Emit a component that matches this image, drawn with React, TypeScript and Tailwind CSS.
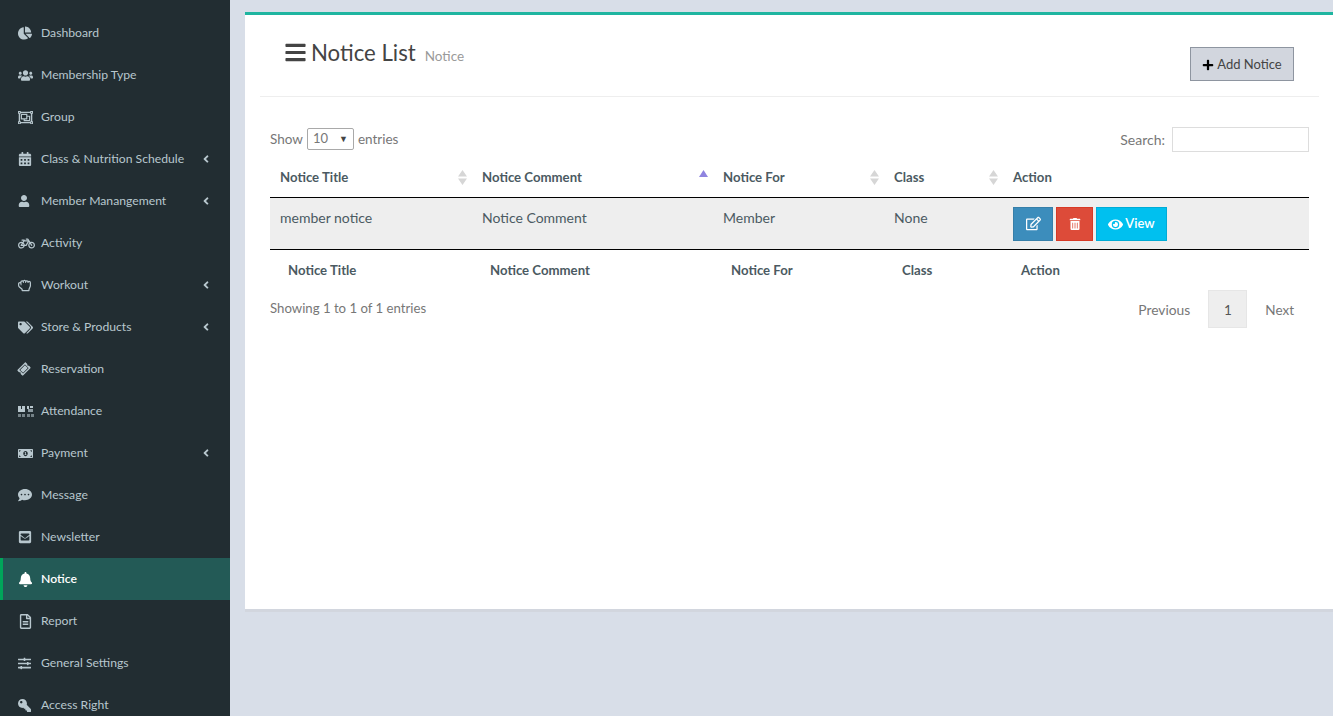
import type { ReactNode } from "react";
import {
  FaAngleLeft,
  FaBars,
  FaBell,
  FaBicycle,
  FaCalendarAlt,
  FaChartPie,
  FaCommentDots,
  FaEnvelopeSquare,
  FaEye,
  FaKey,
  FaMoneyBillAlt,
  FaPlus,
  FaRegEdit,
  FaRegFileAlt,
  FaRegHandRock,
  FaRegObjectGroup,
  FaSlidersH,
  FaTags,
  FaTicketAlt,
  FaTrashAlt,
  FaUser,
  FaUsers,
} from "react-icons/fa";

interface NavItem {
  label: string;
  icon: ReactNode;
  arrow?: boolean;
  active?: boolean;
}

function AttendanceIcon() {
  return (
    <svg width="16" height="11" viewBox="0 0 16 11" fill="currentColor">
      <rect x="0" y="0" width="3" height="3" />
      <rect x="4" y="0" width="3" height="3" />
      <rect x="0" y="3" width="7" height="3" />
      <rect x="9" y="0" width="2" height="3" />
      <rect x="12" y="0" width="3" height="2" />
      <rect x="10" y="3" width="5" height="3" opacity="0.7" />
      <rect x="0" y="8" width="3" height="3" opacity="0.55" />
      <rect x="4" y="8" width="3" height="3" opacity="0.55" />
      <rect x="9" y="8" width="3" height="3" opacity="0.55" />
      <rect x="13" y="8" width="3" height="3" opacity="0.55" />
    </svg>
  );
}

const navItems: NavItem[] = [
  { label: "Dashboard", icon: <FaChartPie size={14} /> },
  { label: "Membership Type", icon: <FaUsers size={15} /> },
  { label: "Group", icon: <FaRegObjectGroup size={15} /> },
  { label: "Class & Nutrition Schedule", icon: <FaCalendarAlt size={14} />, arrow: true },
  { label: "Member Manangement", icon: <FaUser size={12} />, arrow: true },
  { label: "Activity", icon: <FaBicycle size={17} /> },
  { label: "Workout", icon: <FaRegHandRock size={13} />, arrow: true },
  { label: "Store & Products", icon: <FaTags size={15} />, arrow: true },
  { label: "Reservation", icon: <FaTicketAlt size={12} className="-rotate-45" /> },
  { label: "Attendance", icon: <AttendanceIcon /> },
  { label: "Payment", icon: <FaMoneyBillAlt size={15} />, arrow: true },
  { label: "Message", icon: <FaCommentDots size={14} /> },
  { label: "Newsletter", icon: <FaEnvelopeSquare size={14} /> },
  { label: "Notice", icon: <FaBell size={15} />, active: true },
  { label: "Report", icon: <FaRegFileAlt size={15} /> },
  { label: "General Settings", icon: <FaSlidersH size={13} /> },
  { label: "Access Right", icon: <FaKey size={13} className="-scale-x-100" /> },
];

const columns = [
  { label: "Notice Title", value: "member notice", width: "w-[202px]" },
  { label: "Notice Comment", value: "Notice Comment", width: "w-[241px]" },
  { label: "Notice For", value: "Member", width: "w-[171px]" },
  { label: "Class", value: "None", width: "w-[119px]" },
];

function SortArrows({ active }: { active?: boolean }) {
  if (active) {
    return (
      <svg
        width="9"
        height="7"
        viewBox="0 0 9 7"
        className="absolute right-[5px] top-[13px] text-[#8f84e0]"
        fill="currentColor"
      >
        <path d="M4.5 0 9 7H0z" />
      </svg>
    );
  }
  return (
    <svg
      width="9"
      height="15"
      viewBox="0 0 9 15"
      className="absolute right-[5px] top-[13px] text-[#d6d6d6]"
      fill="currentColor"
    >
      <path d="M4.5 0 9 6.500H0zM4.500 15 0 8.500h9z" />
    </svg>
  );
}

export default function App() {
  return (
    <div className="flex h-screen overflow-hidden bg-[#d8dee8] font-['Lato','Open_Sans',sans-serif] text-[13.500px] text-[#4b5a62]">
      <aside className="w-[230px] shrink-0 bg-[#222d32] pt-[12px]">
        {navItems.map((item) => (
          <div
            key={item.label}
            className={`flex h-[42px] items-center border-l-[3px] pr-[18px] text-[12.200px] ${
              item.active
                ? "border-[#00a65a] bg-[#235a56] font-semibold text-white"
                : "border-transparent text-[#b8c7ce]"
            }`}
          >
            <span className="flex w-[38px] items-center pl-[15px]">{item.icon}</span>
            <span className="flex-1 whitespace-nowrap">{item.label}</span>
            {item.arrow && <FaAngleLeft size={12} />}
          </div>
        ))}
      </aside>

      <main className="flex-1 pl-[15px] pt-[12px]">
        <section className="h-[600px] border-t-[3px] border-b-[3px] border-t-[#1fb5a0] border-b-[#d2d6de] bg-white">
          <header className="mx-[15px] flex h-[82px] justify-between border-b border-[#eeeeee] pl-[25px] pr-[25px]">
            <div className="flex items-baseline pt-[23px] text-[#444444]">
              <FaBars size={23} className="-ml-[1px] mr-[4px] translate-y-[3px]" />
              <h1 className="text-[22.200px] font-normal leading-[30px]">Notice List</h1>
              <span className="ml-[9px] text-[13.500px] text-[#9a9a9a]">Notice</span>
            </div>
            <button className="mt-[32px] flex h-[34px] w-[104px] items-center justify-center gap-[3px] border border-[#8e95a0] bg-[#d2d6de] pt-[1px] text-[13px] text-[#444444]">
              <FaPlus size={12} className="text-black" />
              Add Notice
            </button>
          </header>

          <div className="px-[25px]">
            <div className="flex h-[60px] items-center justify-between pt-[24px] text-[#777777]">
              <div className="flex items-center gap-[4px]">
                <span>Show</span>
                <div className="flex h-[22px] w-[47px] items-center justify-between rounded-[2px] border border-[#a9a9a9] px-[5px] text-[13px]">
                  10
                  <span className="text-[9px] text-[#444444]">▼</span>
                </div>
                <span>entries</span>
              </div>
              <div className="flex items-center gap-[7px]">
                <span className="text-[14px]">Search:</span>
                <div className="h-[25px] w-[137px] border border-[#dddddd]" />
              </div>
            </div>

            <table className="w-[1039px] table-fixed border-collapse">
              <thead>
                <tr className="h-[40px] border-b border-black text-left text-[13.200px]">
                  {columns.map((col, i) => (
                    <th key={col.label} className={`relative pl-[10px] pt-[2px] font-bold ${col.width}`}>
                      {col.label}
                      <SortArrows active={i === 1} />
                    </th>
                  ))}
                  <th className="pl-[10px] pt-[2px] font-bold">Action</th>
                </tr>
              </thead>
              <tbody>
                <tr className="h-[52px] border-b border-black bg-[#eeeeee]">
                  {columns.map((col) => (
                    <td key={col.label} className="pl-[10px] pt-[9px] align-top text-[14px]">
                      {col.value}
                    </td>
                  ))}
                  <td className="pl-[10px] pt-[1px]">
                    <div className="flex gap-[3px]">
                      <button className="flex h-[34px] w-[40px] items-center justify-center border border-[#367fa9] bg-[#3c8dbc] text-white">
                        <FaRegEdit size={15} />
                      </button>
                      <button className="flex h-[34px] w-[37px] items-center justify-center border border-[#d73925] bg-[#dd4b39] text-white">
                        <FaTrashAlt size={12} />
                      </button>
                      <button className="flex h-[34px] w-[71px] items-center justify-center gap-[2px] border border-[#00acd6] bg-[#00c0ef] pt-[1px] text-[13px] font-semibold text-white">
                        <FaEye size={15} />
                        View
                      </button>
                    </div>
                  </td>
                </tr>
              </tbody>
              <tfoot>
                <tr className="h-[41px] text-left text-[13.200px]">
                  {columns.map((col) => (
                    <th key={col.label} className="pl-[18px] pt-[2px] font-bold">
                      {col.label}
                    </th>
                  ))}
                  <th className="pl-[18px] pt-[2px] font-bold">Action</th>
                </tr>
              </tfoot>
            </table>

            <div className="flex justify-between text-[#777777]">
              <div className="pt-[9px] text-[13.200px]">Showing 1 to 1 of 1 entries</div>
              <div className="flex items-center">
                <span className="pr-[18px] pt-[2px] text-[13.800px]">Previous</span>
                <span className="flex h-[38px] w-[39px] items-center justify-center border border-[#e6e6e6] bg-[#eeeeee] pt-[2px] text-[#555555]">
                  1
                </span>
                <span className="pl-[18px] pr-[15px] pt-[2px]">Next</span>
              </div>
            </div>
          </div>
        </section>
      </main>
    </div>
  );
}
